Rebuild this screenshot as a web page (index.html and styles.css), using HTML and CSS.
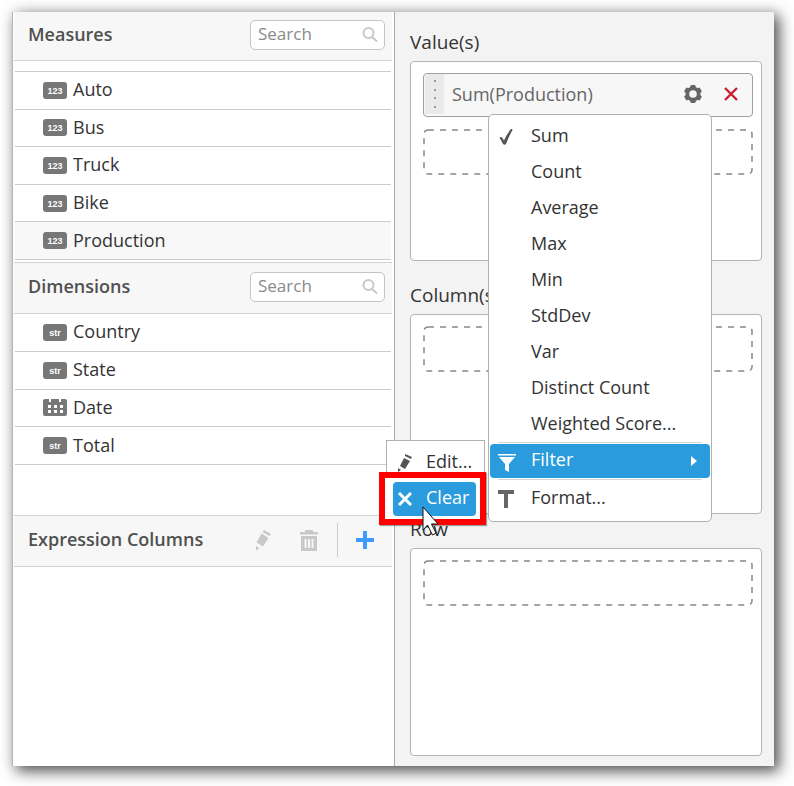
FILE: index.html
```html
<!DOCTYPE html>
<html lang="en">
<head>
<meta charset="utf-8">
<title>Data assignment</title>
<link rel="stylesheet" href="styles.css">
</head>
<body>
<main class="window">
  <aside class="fields">
    <section class="group group-measures">
      <header class="group-head">
        <h2>Measures</h2>
        <label class="search">
          <input type="text" placeholder="Search" aria-label="Search measures">
          <svg width="16" height="16" viewBox="0 0 16 16"><circle cx="6.5" cy="6" r="5"/><path d="M10 10l5 4.500"/></svg>
        </label>
      </header>
      <ul class="list">
        <li><span class="badge">123</span>Auto</li>
        <li><span class="badge">123</span>Bus</li>
        <li><span class="badge">123</span>Truck</li>
        <li><span class="badge">123</span>Bike</li>
        <li class="current"><span class="badge">123</span>Production</li>
      </ul>
    </section>
    <section class="group group-dimensions">
      <header class="group-head">
        <h2>Dimensions</h2>
        <label class="search">
          <input type="text" placeholder="Search" aria-label="Search dimensions">
          <svg width="16" height="16" viewBox="0 0 16 16"><circle cx="6.500" cy="6" r="5"/><path d="M10 10l5 4.500"/></svg>
        </label>
      </header>
      <ul class="list">
        <li><span class="badge">str</span>Country</li>
        <li><span class="badge">str</span>State</li>
        <li><svg class="calendar" width="24" height="17" viewBox="0 0 24 17"><path fill="#777" d="M2 0H6V3H8V0H16V3H18V0H22Q24 0 24 2V15Q24 17 22 17H2Q0 17 0 15V2Q0 0 2 0Z"/><path fill="#fff" d="M5 6h3v3H5zM11 6h3v3h-3zM17 6h3v3h-3zM5 11h3v3H5zM11 11h3v3h-3zM17 11h3v3h-3z"/></svg>Date</li>
        <li><span class="badge">str</span>Total</li>
      </ul>
    </section>
    <section class="group">
      <header class="group-head">
        <h2>Expression Columns</h2>
        <div class="tools">
          <button type="button" aria-label="Edit expression" disabled><svg width="16" height="22" viewBox="0 0 16 22"><path fill="#c8c8c8" d="M9 1l7 4-1.500 2-7-4zM6.500 4.500l7 4.500-5.500 8.500-6.500-4zM1 17l3.500 2L1 21.500z"/></svg></button>
          <button type="button" aria-label="Delete expression" disabled><svg width="20" height="22" viewBox="0 0 20 22"><path fill="#c8c8c8" fill-rule="evenodd" d="M6 1h8v2h5v2.500H1V3h5zM2 7h16v15H2zM5.500 10v9h2v-9zM9 10v9h2v-9zM12.500 10v9h2v-9z"/></svg></button>
          <span class="divider"></span>
          <button type="button" aria-label="Add expression"><svg width="18" height="18" viewBox="0 0 18 18"><path stroke="#3d9bff" stroke-width="4" d="M9 0v18M0 9h18"/></svg></button>
        </div>
      </header>
    </section>
  </aside>

  <div class="zones">
    <section class="zone zone-values">
      <h3>Value(s)</h3>
      <div class="dropbox">
        <div class="chip">
          <span class="grip"><i></i><i></i><i></i><i></i></span>
          <span class="chip-name">Sum(Production)</span>
          <button type="button" aria-label="Settings"><svg width="20" height="20" viewBox="0 0 20 20"><g fill="#666"><path fill-rule="evenodd" d="M10 2.500a7.500 7.500 0 1 0 0 15a7.500 7.500 0 1 0 0-15zM10 6.200a3.800 3.800 0 1 1 0 7.600a3.800 3.800 0 1 1 0-7.600z"/><path id="tooth" d="M7 4L7.800 1h4.400l.8 3z"/><use href="#tooth" transform="rotate(60 10 10)"/><use href="#tooth" transform="rotate(120 10 10)"/><use href="#tooth" transform="rotate(180 10 10)"/><use href="#tooth" transform="rotate(240 10 10)"/><use href="#tooth" transform="rotate(300 10 10)"/></g></svg></button>
          <button type="button" aria-label="Remove"><svg width="14" height="14" viewBox="0 0 14 14"><path stroke="#c8202d" stroke-width="2.400" d="M1 1l12 12M13 1L1 13"/></svg></button>

          <div class="menu" role="menu">
            <button type="button" role="menuitem"><svg class="icon" width="16" height="18" viewBox="0 0 16 18"><path fill="#555" d="M1.500 9.500q1.500-1 2.500 0l2 3Q9 5.500 13 1q1.700-.5 1.500 1Q11 8 8 16q-1.500 1.500-3 0z"/></svg>Sum</button>
            <button type="button" role="menuitem">Count</button>
            <button type="button" role="menuitem">Average</button>
            <button type="button" role="menuitem">Max</button>
            <button type="button" role="menuitem">Min</button>
            <button type="button" role="menuitem">StdDev</button>
            <button type="button" role="menuitem">Var</button>
            <button type="button" role="menuitem">Distinct Count</button>
            <button type="button" role="menuitem">Weighted Score...</button>
            <hr>
            <div class="branch">
              <button type="button" role="menuitem" class="active"><svg class="icon" width="18" height="18" viewBox="0 0 18 18"><path fill="#fff" d="M0 0h18v1.500H0zM1 3h16l-6 7v8l-4-2v-6z"/></svg>Filter<svg class="arrow" width="6" height="10" viewBox="0 0 6 10"><path fill="#fff" d="M0 0l6 5-6 5z"/></svg></button>
              <div class="submenu" role="menu">
                <button type="button" role="menuitem"><svg class="icon" width="14" height="18" viewBox="0 0 14 18"><path fill="#555" d="M7 0l7 3-1 2-6-3zM6 4l6 3-5 8-5-3zM0 14l3 2-3 2z"/></svg>Edit...</button>
                <div class="callout">
                  <button type="button" role="menuitem" class="active"><svg class="icon" width="14" height="14" viewBox="0 0 14 14"><path stroke="#fff" stroke-width="3" d="M1 1l12 12M13 1L1 13"/></svg>Clear</button>
                  <svg class="pointer" width="18" height="32" viewBox="0 0 18 32"><path fill="#fff" stroke="#111" d="M1 1v23l4.500-5 5 10 3.500-2-4.500-9h6.500z"/></svg>
                </div>
              </div>
            </div>
            <hr>
            <button type="button" role="menuitem"><svg class="icon" width="16" height="18" viewBox="0 0 16 18"><rect width="16" height="4" fill="#666"/><rect x="6" width="4" height="18" fill="#666"/></svg>Format...</button>
          </div>
        </div>
        <svg class="slot"><rect x="1" y="1" rx="4"/></svg>
      </div>
    </section>
    <section class="zone zone-columns">
      <h3>Column(s)</h3>
      <div class="dropbox"><svg class="slot"><rect x="1" y="1" rx="4"/></svg></div>
    </section>
    <section class="zone zone-row">
      <h3>Row</h3>
      <div class="dropbox"><svg class="slot"><rect x="1" y="1" rx="4"/></svg></div>
    </section>
  </div>
</main>
</body>
</html>
```
FILE: styles.css
```css
* { box-sizing: border-box; }

body {
  margin: 0;
  min-height: 100vh;
  padding: 12px 20px 20px 13px;
  display: flex;
  background: #fff;
  color: #333;
  font: 18px/26px "Open Sans", "Noto Sans", sans-serif;
}

h2, h3, ul { margin: 0; padding: 0; }

button {
  margin: 0;
  padding: 0;
  border: 0;
  background: none;
  color: inherit;
  font: inherit;
}

svg { display: block; flex: none; }

.window {
  flex: 1;
  display: grid;
  grid-template-columns: minmax(0, 382fr) minmax(0, 379fr);
  background: #f3f3f3;
  box-shadow: -1px 0 0 #b4b4b4, 4px 4px 14px 1px rgba(0, 0, 0, .7);
}

/* Field lists */

.fields {
  display: flex;
  flex-direction: column;
  background: #fff;
  border-right: 1px solid #aaa;
}

.group-measures { min-height: 250px; }
.group-dimensions { min-height: 253px; }

.group-head {
  display: flex;
  align-items: center;
  justify-content: space-between;
  height: 52px;
  margin: 0 2px 0 1px;
  padding: 0 7px 2px 14px;
  background: #f7f7f7;
  border-top: 1px solid #d2d2d2;
  border-bottom: 1px solid #d2d2d2;
}

.group-measures .group-head { height: 49px; border-top: 0; }

.group-head h2 {
  padding-bottom: 2px;
  color: #505050;
  font-size: 18px;
  font-weight: 600;
}

.search {
  display: flex;
  align-items: center;
  width: 135px;
  height: 30px;
  padding: 0 6px 0 7px;
  background: #fff;
  border: 1px solid #c4c4c4;
  border-radius: 5px;
}

.search input {
  flex: 1;
  min-width: 0;
  padding: 0 0 2px;
  border: 0;
  outline: 0;
  background: none;
  font: inherit;
  font-size: 17px;
}

.search input::placeholder { color: #8a8a8a; }
.search svg { fill: none; stroke: #c8c8c8; stroke-width: 2; }

.list {
  display: grid;
  grid-auto-rows: 1fr;
  min-height: 151px;
  margin: 0 3px 0 2px;
  list-style: none;
}

.group-measures .list {
  min-height: 189px;
  margin-top: 10px;
  border-top: 1px solid #ccc;
}

.list li {
  display: flex;
  align-items: center;
  gap: 6px;
  padding: 0 0 2px 28px;
  border-bottom: 1px solid #ccc;
}

.list .current { background: #f8f8f8; }

.badge {
  width: 24px;
  height: 17px;
  background: #777;
  border-radius: 3px;
  color: #fff;
  font: bold 9px/18px "Liberation Sans", sans-serif;
  text-align: center;
}

.badge, .calendar { margin-top: 2px; }

.tools { display: flex; align-items: center; gap: 28px; padding-right: 11px; }
.divider { width: 1px; height: 34px; margin: 0 -10px; background: #ccc; }

/* Drop zones */

.zones {
  display: flex;
  flex-direction: column;
  padding: 17px 12px 10px 15px;
}

.zone h3 { font-size: 19px; font-weight: 400; line-height: 26px; margin-bottom: 6px; }
.zone-columns { margin-top: 21px; }
.zone-row { flex: 1; display: flex; flex-direction: column; margin-top: 2px; }
.zone-row .dropbox { flex: 1; }

.dropbox {
  min-height: 200px;
  padding: 11px 8px 11px 12px;
  background: #fff;
  border: 1px solid #b4b4b4;
  border-radius: 4px;
}

.chip {
  position: relative;
  display: flex;
  align-items: center;
  height: 44px;
  margin-bottom: 12px;
  padding: 0 14px 2px 1px;
  gap: 21px;
  background: #f7f7f7;
  border: 1px solid #a0a0a0;
  border-radius: 4px;
  color: #666;
}

.chip-name { flex: 1; margin-left: -13px; }

.grip {
  display: flex;
  flex-direction: column;
  align-items: center;
  justify-content: space-evenly;
  width: 19px;
  height: 40px;
  background: #eaeaea;
}

.grip i { width: 2px; height: 2px; background: #999; }

.slot { width: 100%; height: 46px; }

.slot rect {
  width: calc(100% - 2px);
  height: 44px;
  fill: none;
  stroke: #888;
  stroke-width: 1.5px;
  stroke-dasharray: 6 6;
}

/* Context menu */

.menu, .submenu {
  position: absolute;
  z-index: 2;
  background: #fff;
  border: 1px solid #b0b0b0;
  color: #333;
}

.menu {
  top: 40px;
  right: 40px;
  width: 224px;
  padding: 3px 1px 5px;
  border-radius: 5px;
}

.menu button {
  position: relative;
  display: flex;
  align-items: center;
  width: 100%;
  height: 36px;
  padding: 0 0 2px 41px;
  border-radius: 4px;
}

.menu hr { height: 1px; margin: 0 8px; border: 0; background: #d4d4d4; }
.icon { position: absolute; left: 8px; top: 10px; }
.branch { position: relative; padding: 1px 0; }
.menu .active { height: 34px; padding-bottom: 4px; background: #2a9bdc; color: #fff; }
.arrow { margin: 4px 13px 0 auto; }

.submenu {
  top: -3px;
  right: calc(100% + 5px);
  width: 99px;
  height: 84px;
  padding: 3px 0;
}

.submenu button { padding-left: 39px; }
.submenu .icon { left: 11px; }

.callout {
  position: absolute;
  top: 31px;
  left: -8px;
  width: 107px;
  padding: 4px 3px 3px 8px;
  border: 6px solid #f00;
  box-shadow: 1px 1px 1px rgba(0, 0, 0, .35);
  background: #fff;
}

.callout .active { width: 83px; padding-left: 33px; }
.callout .icon { left: 5px; }
.pointer { position: absolute; left: 37px; top: 28px; }
```
